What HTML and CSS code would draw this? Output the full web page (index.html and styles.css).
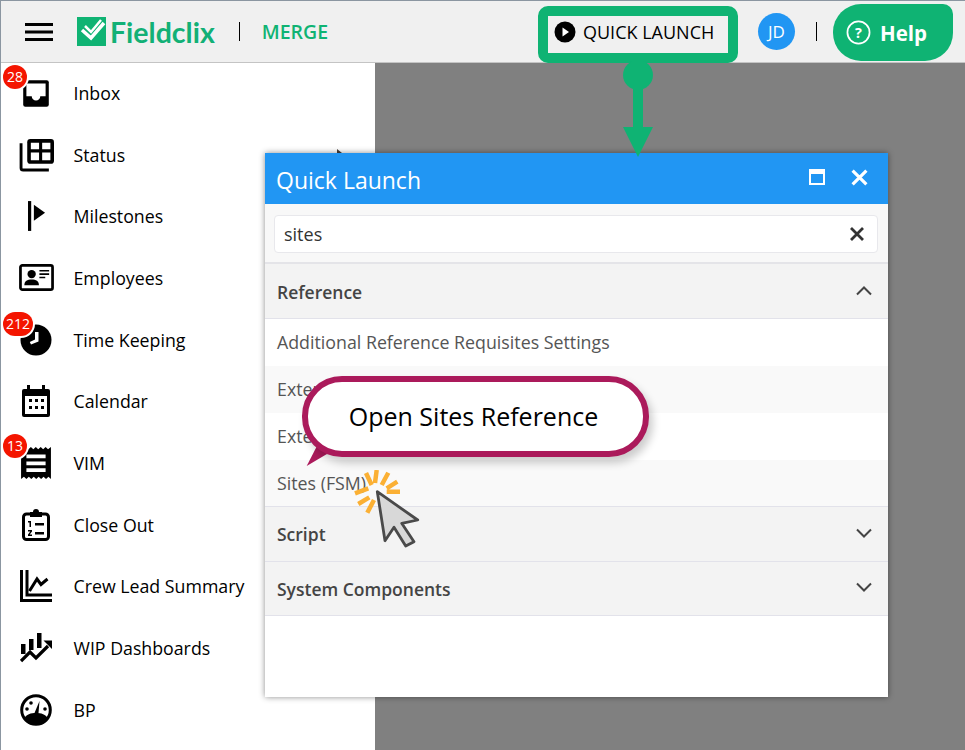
FILE: index.html
```html
<!DOCTYPE html>
<html lang="en">
<head>
<meta charset="utf-8">
<title>Fieldclix Quick Launch</title>
<link rel="stylesheet" href="styles.css">
</head>
<body>
<div class="app">
  <header class="topbar">
    <svg class="burger" viewBox="0 0 28 18"><path d="M0 1.500h28M0 9h28M0 16.500h28" stroke="#000" stroke-width="3"/></svg>
    <svg class="logo-mark" viewBox="0 0 29 29"><rect width="29" height="29" fill="#0fb373"/><path d="M5 13l9 8L27 6" fill="none" stroke="#fff" stroke-width="3.500"/><path d="M8 9l6 6L24 3" fill="none" stroke="#fff" stroke-width="2.500"/><path d="M14 26h15v3H14z" fill="#0fb373"/></svg>
    <span class="logo-text">Fieldclix</span>
    <span class="divider divider-logo"></span>
    <span class="merge">MERGE</span>
    <span class="spacer"></span>
    <div class="quick-launch">
      <svg class="play" viewBox="0 0 22 22"><circle cx="11" cy="11" r="10.500" fill="#000"/><path d="M8.500 6.500l6.500 4.500-6.500 4.500z" fill="#fff"/></svg>
      <span>QUICK LAUNCH</span>
    </div>
    <span class="avatar">JD</span>
    <span class="divider divider-user"></span>
    <div class="help">
      <svg class="help-icon" viewBox="0 0 26 26"><circle cx="13" cy="13" r="11.500" fill="none" stroke="#fff" stroke-width="1.800"/><text x="13" y="18.500" text-anchor="middle" class="help-q">?</text></svg>
      <span>Help</span>
    </div>
  </header>
  <div class="body">
    <nav class="sidebar">
      <div class="item">
        <span class="icon"><svg viewBox="0 0 30 30"><path d="M5 3h20a2 2 0 0 1 2 2v21a2 2 0 0 1-2 2H5a2 2 0 0 1-2-2V5a2 2 0 0 1 2-2z" fill="#000"/><path d="M6 6h18v12h-5a4 4 0 0 1-8 0H6z" fill="#fff"/></svg></span>
        <span>Inbox</span><b class="badge">28</b>
      </div>
      <div class="item">
        <span class="icon icon-wide"><svg viewBox="0 0 34 34"><path d="M2 6v24a2 2 0 0 0 2 2h25" fill="none" stroke="#000" stroke-width="2.800"/><rect x="8" y="2" width="26" height="24" rx="3" fill="#000"/><path d="M11.500 5.500h8v6.500h-8zM22.500 5.500h8v6.500h-8zM11.500 15h8v7.500h-8zM22.500 15h8v7.500h-8z" fill="#fff"/></svg></span>
        <span>Status</span>
      </div>
      <div class="item">
        <span class="icon"><svg viewBox="0 0 30 30"><path d="M7.500 1h3v28h-3z" fill="#000"/><path d="M13 4.500l10.500 7.500L13 19.500z" fill="#000"/></svg></span>
        <span>Milestones</span>
      </div>
      <div class="item">
        <span class="icon icon-wide"><svg viewBox="0 0 36 36"><rect x="1.500" y="5.500" width="33" height="25" rx="2" fill="#fff" stroke="#000" stroke-width="2.800"/><circle cx="13" cy="14.500" r="4.300" fill="#000"/><path d="M5.500 26c0-4.500 3-6 7.500-6s7.500 1.500 7.500 6z" fill="#000"/><path d="M21 11h10M21 14.500h10M21 18h6" stroke="#000" stroke-width="1.600"/></svg></span>
        <span>Employees</span>
      </div>
      <div class="item">
        <span class="icon"><svg viewBox="0 0 32 32"><circle cx="16" cy="16" r="15.500" fill="#000"/><path d="M15 8h3.500v9.500l-7.500 3-1.200-2.500 5.200-2.500z" fill="#fff"/></svg></span>
        <span>Time Keeping</span><b class="badge">212</b>
      </div>
      <div class="item">
        <span class="icon"><svg viewBox="0 0 28 32"><path d="M2 4h24a2 2 0 0 1 2 2v24a2 2 0 0 1-2 2H2a2 2 0 0 1-2-2V6a2 2 0 0 1 2-2z" fill="#000"/><path d="M5 0h3v5H5zM20 0h3v5h-3z" fill="#000"/><path d="M3 11h22v18H3z" fill="#fff"/><path d="M7 14h3v3H7zM13 14h3v3h-3zM19 14h3v3h-3zM7 21h3v3H7zM13 21h3v3h-3zM19 21h3v3h-3z" fill="#000"/></svg></span>
        <span>Calendar</span>
      </div>
      <div class="item">
        <span class="icon"><svg viewBox="0 0 28 30"><path d="M0 0l2.300 2 2.300-2 2.300 2 2.300-2 2.300 2 2.300-2 2.300 2 2.300-2 2.300 2 2.300-2 2.300 2L28 0v30l-2.300-2-2.300 2-2.300-2-2.300 2-2.300-2-2.300 2-2.300-2-2.300 2-2.300-2-2.300 2-2.300-2L0 30z" fill="#000"/><path d="M5 7h18v3.500H5zM5 13.500h18V17H5zM5 20h18v3.500H5z" fill="#fff"/></svg></span>
        <span>VIM</span><b class="badge badge-high">13</b>
      </div>
      <div class="item">
        <span class="icon"><svg viewBox="0 0 28 32"><rect x="1.500" y="5" width="25" height="25.500" rx="3" fill="#fff" stroke="#000" stroke-width="3"/><path d="M8 3h3a3 3 0 0 1 6 0h3v5H8z" fill="#000"/><path d="M6 12h3v6H7.500v-4.500H6zM6 21h4v1.500l-2.300 3H10V27H6v-1.500L8.300 22.500H6zM13 14h9v2.500h-9zM13 23h9v2.500h-9z" fill="#000"/></svg></span>
        <span>Close Out</span>
      </div>
      <div class="item">
        <span class="icon"><svg viewBox="0 0 32 32"><path d="M1.500 0v30.500H32M7 0v25h25" fill="none" stroke="#000" stroke-width="3"/><path d="M9.500 21L17 9l4 5.500 3.500-3 3-2.500" fill="none" stroke="#000" stroke-width="3"/></svg></span>
        <span>Crew Lead Summary</span>
      </div>
      <div class="item">
        <span class="icon"><svg viewBox="0 0 32 30"><path d="M1 11h4.500v10H1zM9 6h4.500v11H9zM17 0h4.500v15H17z" fill="#000"/><path d="M1 28l9-9 6 6 12-12" fill="none" stroke="#000" stroke-width="3.200"/><path d="M23.500 7.500H32V16z" fill="#000"/></svg></span>
        <span>WIP Dashboards</span>
      </div>
      <div class="item">
        <span class="icon"><svg viewBox="0 0 32 32"><circle cx="16" cy="16" r="14.300" fill="#fff" stroke="#000" stroke-width="3"/><path d="M4 25c2-5 7-6 12-6s10 1 12 6l-5 5H9z" fill="#000"/><path d="M19.500 7l-1 12h-4z" fill="#000"/><circle cx="7" cy="15" r="1.800"/><circle cx="11" cy="9" r="1.800"/><circle cx="25" cy="15" r="1.800"/></svg></span>
        <span>BP</span>
      </div>
      <svg class="status-arrow" viewBox="0 0 10 8"><path d="M0 0l10 8H0z" fill="#4a4038"/></svg>
    </nav>
    <div class="backdrop"></div>
  </div>

  <section class="dialog">
    <div class="dialog-title">
      <span class="title-text">Quick Launch</span>
      <svg class="win-btn" viewBox="0 0 16 16"><path d="M1 1h14v14H1z" fill="none" stroke="#fff" stroke-width="2"/><path d="M1 1h14v4H1z" fill="#fff"/></svg>
      <svg class="win-btn win-close" viewBox="0 0 16 16"><path d="M1.500 1.500l13 13M14.500 1.500l-13 13" stroke="#fff" stroke-width="3"/></svg>
    </div>
    <div class="search-wrap">
      <div class="search">
        <span>sites</span>
        <svg class="clear" viewBox="0 0 16 16"><path d="M2 2l12 12M14 2L2 14" stroke="#333" stroke-width="2.800"/></svg>
      </div>
    </div>
    <div class="group group-open">
      <span>Reference</span>
      <svg class="chev" viewBox="0 0 16 10"><path d="M1 8.500l7-7 7 7" fill="none" stroke="#444" stroke-width="2"/></svg>
    </div>
    <div class="row">Additional Reference Requisites Settings</div>
    <div class="row alt">External Sites</div>
    <div class="row">External Systems</div>
    <div class="row alt last">Sites (FSM)</div>
    <div class="group">
      <span>Script</span>
      <svg class="chev" viewBox="0 0 16 10"><path d="M1 1.500l7 7 7-7" fill="none" stroke="#444" stroke-width="2"/></svg>
    </div>
    <div class="group group-last">
      <span>System Components</span>
      <svg class="chev" viewBox="0 0 16 10"><path d="M1 1.500l7 7 7-7" fill="none" stroke="#444" stroke-width="2"/></svg>
    </div>
  </section>

  <svg class="arrow" viewBox="0 0 30 96"><circle cx="15" cy="14" r="15" fill="#0fb373"/><path d="M10 14h10v52H10z" fill="#0fb373"/><path d="M0 66h30L15 96z" fill="#0fb373"/></svg>

  <div class="callout">
    <svg class="callout-tail" viewBox="0 0 40 30"><path d="M3.700 24L16 0h16v7.300z" fill="#ab1a5b"/></svg>
    <div class="callout-body">Open Sites Reference</div>
  </div>

  <svg class="pointer" viewBox="0 0 70 80">
    <path d="M22.700 0L21 13M34.300 2.700L27.700 15M43.300 11.700L32.700 18.300M46 21.700H32.700M12 3l5.700 12M1 23.300l13.300-5M4.300 34l11-6.700M13.300 42.700L20 30" stroke="#fbb034" stroke-width="4.500" fill="none"/>
    <path d="M23.300 21.700L63.700 50 47.700 53.300 60 71.700 51.700 76 40 57.300 31 70.700z" fill="#d8d8d8" stroke="#4a4a4a" stroke-width="2.800" stroke-linejoin="round"/>
  </svg>
</div>
</body>
</html>
```

FILE: styles.css
```css
* { box-sizing: border-box; }
html, body { margin: 0; padding: 0; }
body { width: 965px; height: 750px; overflow: hidden; font-family: "Open Sans", "Noto Sans", sans-serif; color: #000; background: #fff; }
.app { position: relative; width: 965px; height: 750px; display: flex; flex-direction: column; border-top: 1px solid #8b96a1; border-left: 1px solid #8b96a1; overflow: hidden; }

.topbar { height: 62px; flex: none; display: flex; align-items: center; background: #f0f0f0; border-bottom: 1px solid #c4c4c4; padding-left: 24px; }
.burger { width: 28px; height: 18px; flex: none; }
.logo-mark { width: 29px; height: 29px; margin-left: 24px; flex: none; }
.logo-text { font-family: "Lato", sans-serif; font-size: 28.500px; font-weight: 700; color: #12b076; margin-left: 4px; }
.divider { width: 1px; height: 19px; background: #000; flex: none; }
.divider-logo { margin-left: 24px; }
.merge { color: #0fb373; font-size: 19.500px; font-weight: 600; margin-left: 22px; }
.spacer { flex: 1; }
.quick-launch { width: 200px; height: 57px; margin-top: 6px; border: 10px solid #0fb373; border-radius: 10px; margin-right: 20px; background: #f0f0f0; display: flex; align-items: center; padding: 0 0 6px 6px; gap: 7px; font-size: 18px; white-space: nowrap; }
.play { width: 22px; height: 22px; flex: none; }
.avatar { width: 37px; height: 37px; border-radius: 50%; background: #2196f3; color: #fff; font-size: 17px; display: flex; align-items: center; justify-content: center; flex: none; }
.divider-user { margin-left: 21px; margin-right: 16px; }
.help { width: 120px; height: 57px; margin-top: 2px; background: #0fb373; border-radius: 28px 10px 28px 28px; color: #fff; font-size: 20.500px; font-weight: 700; display: flex; align-items: center; gap: 9px; padding-left: 13px; margin-right: 12px; flex: none; }
.help-icon { width: 25px; height: 25px; flex: none; }
.help-q { font-size: 15px; font-weight: 700; fill: #fff; font-family: "Open Sans", sans-serif; }

.body { flex: 1; display: flex; min-height: 0; }
.sidebar { position: relative; width: 374px; flex: none; background: #fff; }
.backdrop { flex: 1; background: #808080; }
.item { position: relative; height: 61.700px; display: flex; align-items: center; padding: 0 0 2px 72.500px; font-size: 17.750px; }
.icon { position: absolute; left: 17px; top: 50%; width: 36px; height: 34px; margin-top: -18px; display: flex; align-items: center; justify-content: center; }
.icon svg { height: 32px; width: 32px; flex: none; }
.icon-wide svg { width: 35px; height: 35px; }
.badge { position: absolute; left: 2px; top: 2px; min-width: 24px; height: 24px; padding: 0 3px; border-radius: 12px; background: #f41500; color: #fff; font-size: 14px; font-weight: 400; line-height: 24px; text-align: center; box-shadow: 0 0 0 2px #fff; }
.badge-high { top: 1px; }
.status-arrow { position: absolute; left: 336px; top: 86px; width: 10px; height: 8px; }

.dialog { position: absolute; left: 264px; top: 152px; width: 623px; height: 544px; background: #fff; box-shadow: 0 0 6px rgba(0,0,0,.45); color: #444; }
.dialog-title { height: 51px; background: #2196f3; color: #fff; display: flex; align-items: center; padding: 2px 20px 0 11px; gap: 26px; }
.title-text { flex: 1; font-size: 23px; }
.win-btn { width: 16px; height: 16px; flex: none; margin-top: -5px; }
.win-close { width: 17px; height: 17px; margin-top: -4px; }
.search-wrap { height: 60px; background: #f8f8f8; padding: 11px 10px 10px 9px; border-bottom: 2px solid #e4e4e8; }
.search { height: 38px; background: #fff; border: 1px solid #e8e8ec; border-radius: 4px; display: flex; align-items: center; justify-content: space-between; padding: 0 12px 0 9px; font-size: 18px; color: #333; }
.clear { width: 16px; height: 16px; }
.group { height: 55px; background: #f3f3f3; display: flex; align-items: center; justify-content: space-between; padding: 0 16px 0 12px; font-size: 17.500px; font-weight: 600; color: #444; border-bottom: 1px solid #e2e2ea; }
.group-open { padding-top: 1px; }
.group-last { height: 54px; }
.chev { width: 16px; height: 10px; flex: none; margin-top: -3px; }
.group-open .chev { margin-top: -2px; }
.row { height: 47px; display: flex; align-items: center; padding: 0 0 1px 12px; font-size: 17.800px; color: #555; }
.row.alt { background: #f9f9f9; }
.row.last { border-bottom: 1px solid #e2e2ea; }

.arrow { position: absolute; left: 622px; top: 60px; width: 30px; height: 96px; }
.callout { position: absolute; left: 301px; top: 375px; }
.callout-body { position: relative; width: 347px; height: 81px; border: 6px solid #ab1a5b; border-radius: 40px; background: #fff; display: flex; align-items: center; justify-content: center; padding: 0 4px 2px 0; font-size: 25px; color: #000; box-shadow: 4px 6px 8px rgba(0,0,0,.2); }
.callout-tail { position: absolute; left: 1px; top: 66px; width: 40px; height: 30px; }
.pointer { position: absolute; left: 353px; top: 469px; width: 70px; height: 80px; }
```
